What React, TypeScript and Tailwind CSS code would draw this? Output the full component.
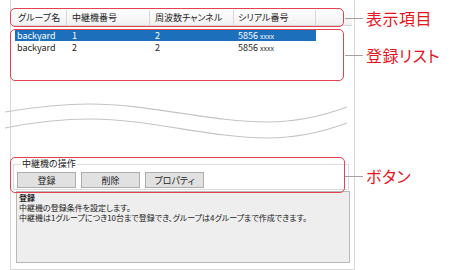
import React from 'react';

const cols = [
  { label: 'グループ名', w: 'w-[55px]', pad: 'pl-[6px]' },
  { label: '中継機番号', w: 'w-[83px]', pad: 'pl-[5px]' },
  { label: '周波数チャンネル', w: 'w-[84px]', pad: 'pl-[5px]' },
  { label: 'シリアル番号', w: 'w-[82px]', pad: 'pl-[4px]' },
];

const rows = [
  { group: 'backyard', relay: '1', ch: '2', serial: '5856', selected: true },
  { group: 'backyard', relay: '2', ch: '2', serial: '5856', selected: false },
];

const callouts = [
  { text: '表示項目', top: 'top-[8px]' },
  { text: '登録リスト', top: 'top-[45px]' },
  { text: 'ボタン', top: 'top-[166px]' },
];

export default function App() {
  return (
    <div className="relative w-[450px] h-[270px] bg-white overflow-hidden font-['Noto_Sans_CJK_JP',sans-serif] [font-feature-settings:'palt'] text-[#222]">
      {/* window */}
      <div className="ml-[10px] w-[345px] h-full border-x border-b border-[#d9d9d9] flex flex-col">
        {/* header */}
        <div className="mt-[10px] ml-[1px] mr-[2px] h-[16px] flex bg-gradient-to-b from-white to-[#f0f0f0] border-b border-[#d6d6d6] text-[9px] leading-none">
          {cols.map((c) => (
            <div key={c.label} className={`${c.w} ${c.pad} h-full flex items-center border-r border-[#d6d6d6]`}>
              {c.label}
            </div>
          ))}
          <div className="flex-1" />
        </div>

        {/* list */}
        <div className="mt-[3px] ml-[4px] w-[301px] flex flex-col text-[9px] leading-none">
          {rows.map((r, i) => (
            <div
              key={i}
              className={`h-[12px] flex items-center ${r.selected ? 'bg-[#1c6fba] text-white' : ''}`}
            >
              <div className="w-[52px] pl-[2px]">{r.group}</div>
              <div className="w-[83px] pl-[5px]">{r.relay}</div>
              <div className="w-[84px] pl-[5px]">{r.ch}</div>
              <div className="w-[82px] pl-[4px] flex items-baseline gap-[2px]">
                <span>{r.serial}</span>
                <span className="text-[7px]">xxxx</span>
              </div>
            </div>
          ))}
        </div>

        {/* break marker */}
        <svg className="mt-[45px] -ml-[11px] shrink-0" width="355" height="44" viewBox="0 98 355 44">
          <path d="M5,112 C35,107 60,104 90,104 C150,104 210,122 268,122 C300,122 325,115 347,107" fill="none" stroke="#c4c4c4" strokeWidth="1.1" />
          <path d="M5,128 C35,122 60,119 90,119 C150,119 210,138 268,138 C300,138 325,131 347,123" fill="none" stroke="#c4c4c4" strokeWidth="1.1" />
        </svg>

        {/* operation group */}
        <fieldset className="mt-[16px] ml-[2px] w-[336px] border border-[#dcdcdc] pl-[3px] pb-[1px]">
          <legend className="ml-[4px] px-[1px] text-[9px] leading-[12px]">中継機の操作</legend>
          <div className="mt-[2px] flex gap-[5px] text-[9px]">
            {['登録', '削除', 'プロパティ'].map((b) => (
              <button
                key={b}
                className="w-[59px] h-[16px] bg-[#e1e1e1] border border-[#adadad] flex items-center justify-center leading-none"
              >
                {b}
              </button>
            ))}
          </div>
        </fieldset>

        {/* description */}
        <div className="mt-[1px] ml-[5px] w-[334px] h-[72px] bg-[#eeeeee] border border-[#b8b8b8] px-[2px] pt-[1px] text-[8px] leading-[10px]">
          <div className="font-bold">登録</div>
          <div>中継機の登録条件を設定します。</div>
          <div>中継機は1グループにつき10台まで登録でき、グループは4グループまで作成できます。</div>
        </div>
      </div>

      {/* annotation boxes */}
      <div className="absolute left-[10px] top-[8px] w-[334px] h-[19px] border-[1.5px] border-[#e5414f] rounded-[5px]" />
      <div className="absolute left-[10px] top-[29px] w-[334px] h-[52px] border-[1.5px] border-[#e5414f] rounded-[5px]" />
      <div className="absolute left-[10px] top-[157px] w-[335px] h-[36px] border-[1.5px] border-[#e5414f] rounded-[5px]" />

      {/* callouts */}
      {callouts.map((c) => (
        <div key={c.text} className={`absolute left-[345px] ${c.top} h-[20px] flex items-center`}>
          <div className="w-[18px] h-px bg-[#a8a0a0]" />
          <span className="ml-[3px] text-[16px] leading-none text-[#e8141e] tracking-[0.5px]">{c.text}</span>
        </div>
      ))}
    </div>
  );
}
